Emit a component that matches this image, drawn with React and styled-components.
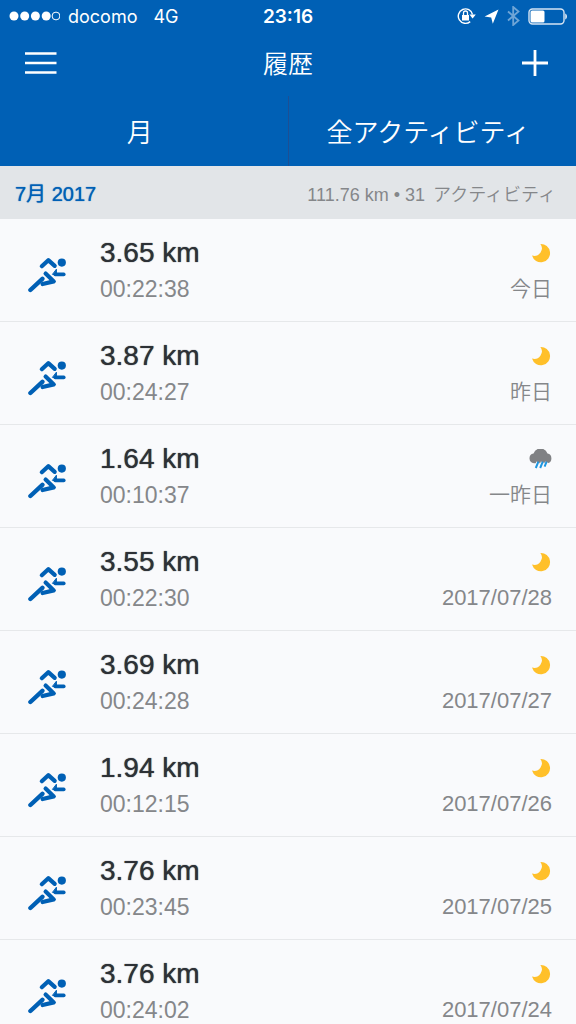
import React from 'react';
import styled, { createGlobalStyle } from 'styled-components';

const colors = {
    blue: '#0060b5',
    divider: '#1d4f94',
    section: '#e2e5e8',
    background: '#f9fafc',
    line: '#e6e8ea',
    text: '#2d3136',
    muted: '#85878a',
    moon: '#ffc02a',
    cloud: '#808184',
    rain: '#1e96e0',
};

const sans = '"Liberation Sans", "Noto Sans CJK JP", sans-serif';
const system = 'Inter, "Noto Sans CJK JP", sans-serif';

const GlobalStyle = createGlobalStyle`
    * {
        box-sizing: border-box;
    }

    body {
        margin: 0;
        background: ${colors.background};
        font-family: ${sans};
        font-weight: 350;
    }

    svg {
        display: block;
    }
`;

const Screen = styled.div`
    display: flex;
    flex-direction: column;
    height: 100vh;
`;

const Header = styled.header`
    flex: none;
    background: ${colors.blue};
    color: #fff;
`;

const StatusBar = styled.div`
    display: grid;
    grid-template-columns: 1fr auto 1fr;
    align-items: center;
    height: 32px;
    padding: 0 8px;
    font-family: ${system};
    font-size: 18px;
    font-weight: 400;
`;

const Carrier = styled.div`
    display: flex;
    align-items: center;
    gap: 8px;
`;

const Network = styled.span`
    margin-left: 8px;
`;

const Clock = styled.time`
    font-size: 19px;
    font-weight: 600;
`;

const StatusIcons = styled.div`
    display: flex;
    align-items: center;
    justify-content: flex-end;
    gap: 8px;
`;

const NavBar = styled.div`
    display: grid;
    grid-template-columns: 1fr auto 1fr;
    align-items: center;
    height: 64px;
    padding: 0 24px;
`;

const Title = styled.h1`
    margin: 0;
    font-size: 25px;
    font-weight: 350;
    line-height: 32px;
`;

const IconButton = styled.button`
    justify-self: ${props => props.$side};
    border: 0;
    padding: 0;
    background: none;
`;

const Tabs = styled.nav`
    display: flex;
    height: 70px;
`;

const Tab = styled.button`
    flex: 1;
    border: 0;
    padding: 0 8px 2px 0;
    background: none;
    color: inherit;
    font-family: inherit;
    font-size: 26px;
    font-weight: 350;

    & + & {
        border-left: 1px solid ${colors.divider};
    }
`;

const SectionHeader = styled.div`
    display: flex;
    flex: none;
    align-items: center;
    justify-content: space-between;
    height: 53px;
    padding: 0 20px 0 15px;
    background: ${colors.section};
`;

const Month = styled.h2`
    margin: 0;
    color: ${colors.blue};
    font-size: 20px;
    font-weight: 400;
    text-shadow: 0 0 1px ${colors.blue};
`;

const Summary = styled.div`
    display: flex;
    align-items: baseline;
    gap: 8px;
    color: ${colors.muted};
    font-size: 18px;
`;

const List = styled.ul`
    flex: 1;
    min-height: 0;
    margin: 0;
    padding: 0;
    overflow-y: auto;
    list-style: none;
    scrollbar-width: none;
`;

const Row = styled.li`
    display: flex;
    align-items: flex-start;
    height: 103px;
    padding: 16px 24px 0 28px;
    border-bottom: 1px solid ${colors.line};
`;

const Sport = styled.div`
    width: 72px;
    padding-top: 22px;
`;

const Stats = styled.div`
    flex: 1;
`;

const Distance = styled.div`
    color: ${colors.text};
    font-size: 28px;
    line-height: 36px;
    text-shadow: 0 0 1px ${colors.text};
`;

const Duration = styled.div`
    color: ${colors.muted};
    font-size: 23px;
    line-height: 36px;
`;

const When = styled.div`
    display: flex;
    flex-direction: column;
    align-items: flex-end;
`;

const Weather = styled.div`
    display: flex;
    align-items: center;
    height: 36px;
`;

const DateText = styled.span`
    color: ${colors.muted};
    font-size: ${props => (props.$relative ? '21px' : '22px')};
    line-height: 36px;
`;

const Signal = () => (
    <svg width="52" height="10" viewBox="0 0 52 10" fill="#fff">
        <circle cx="6" cy="5" r="4.5" />
        <circle cx="16.7" cy="5" r="4.5" />
        <circle cx="27.4" cy="5" r="4.5" />
        <circle cx="38.2" cy="5" r="4.5" />
        <circle cx="48" cy="5" r="3.9" fill="none" stroke="#fff" strokeWidth="1" />
    </svg>
);

const RotationLock = () => (
    <svg width="19" height="18" viewBox="0 0 19 18" fill="none" stroke="#fff">
        <path d="M13.2 14.6A7.2 7.2 0 1 1 15.5 7.5" strokeWidth="1.4" />
        <path d="M12.4 7.5h6.4l-3.2 4z" fill="#fff" stroke="none" />
        <rect x="5" y="8" width="7" height="5.5" fill="#fff" stroke="none" />
        <path d="M6.5 8V6a2 2 0 0 1 4 0v2" strokeWidth="1.3" />
    </svg>
);

const Location = () => (
    <svg width="15" height="15" viewBox="0 0 15 15" fill="#fff">
        <path d="M14.5.5 8.8 14.8 7.2 8.4.6 7.4z" />
    </svg>
);

const Bluetooth = () => (
    <svg width="13" height="20" viewBox="0 0 13 20" fill="none" stroke="#6fa5d6" strokeWidth="1.8">
        <path d="M1 5.5l10.5 9L6.2 19V1l5.3 4.5L1 14.5" />
    </svg>
);

const Battery = () => (
    <svg width="40" height="17" viewBox="0 0 40 17">
        <rect x="1" y="1" width="35" height="15" rx="3.5" fill="none" stroke="#d5e4f3" strokeWidth="1.4" />
        <rect x="2.5" y="2.5" width="14" height="12" rx="1.5" fill="#fff" />
        <path d="M37.2 5.5c2.4.8 2.4 5.2 0 6z" fill="#d5e4f3" />
    </svg>
);

const MenuIcon = () => (
    <svg width="33" height="24" viewBox="0 0 33 24" stroke="#fff" strokeWidth="2.6">
        <path d="M1 1.5h31.5M1 11h31.5M1 20.5h31.5" />
    </svg>
);

const PlusIcon = () => (
    <svg width="30" height="28" viewBox="0 0 30 28" stroke="#fff" strokeWidth="2.8">
        <path d="M0 13h26M13 0v26" />
    </svg>
);

const Runner = () => (
    <svg
        width="40"
        height="38"
        viewBox="0 0 40 38"
        fill="none"
        stroke={colors.blue}
        strokeWidth="4.2"
        strokeLinecap="round"
        strokeLinejoin="round"
    >
        <circle cx="33.8" cy="5.6" r="4.1" fill={colors.blue} stroke="none" />
        <path d="M13.8 9.2l6.5-6 6.4 5.6" />
        <path d="M27.2 17.4h8.6" strokeWidth="3.6" />
        <path d="M28.4 12.6v4.8h-3.6z" fill={colors.blue} strokeWidth="1" />
        <path d="M2.4 33L14.4 21.8" strokeWidth="4.4" />
        <path d="M17.6 16.6l8.2 7.8-11.2 2.6" />
    </svg>
);

const Moon = () => (
    <svg width="22" height="20" viewBox="0 0 22 20" fill={colors.moon}>
        <path d="M10.4.9A9.2 9.2 0 1 1 2 12.6 7.6 7.6 0 0 0 10.4.9z" />
    </svg>
);

const RainCloud = () => (
    <svg width="24" height="21" viewBox="0 0 24 21">
        <path
            d="M6 14.2a4.9 4.9 0 0 1-.5-9.7A7.4 7.4 0 0 1 19.5 4.6a4.9 4.9 0 0 1 0 9.6z"
            fill={colors.cloud}
        />
        <path d="M7.6 19.2l2.4-6M12 19.2l2.4-6M16.2 19.2l2.4-6" stroke={colors.background} strokeWidth="3.4" />
        <path d="M7.8 19l2.6-6.4M12.2 19l2.6-6.4M16.6 17.6l2-5" stroke={colors.rain} strokeWidth="2" />
    </svg>
);

const activities = [
    { distance: '3.65 km', duration: '00:22:38', date: '今日', relative: true },
    { distance: '3.87 km', duration: '00:24:27', date: '昨日', relative: true },
    { distance: '1.64 km', duration: '00:10:37', date: '一昨日', relative: true, rain: true },
    { distance: '3.55 km', duration: '00:22:30', date: '2017/07/28' },
    { distance: '3.69 km', duration: '00:24:28', date: '2017/07/27' },
    { distance: '1.94 km', duration: '00:12:15', date: '2017/07/26' },
    { distance: '3.76 km', duration: '00:23:45', date: '2017/07/25' },
    { distance: '3.76 km', duration: '00:24:02', date: '2017/07/24' },
];

const Activity = ({ distance, duration, date, relative, rain }) => (
    <Row>
        <Sport>
            <Runner />
        </Sport>
        <Stats>
            <Distance>{distance}</Distance>
            <Duration>{duration}</Duration>
        </Stats>
        <When>
            <Weather>{rain ? <RainCloud /> : <Moon />}</Weather>
            <DateText $relative={relative}>{date}</DateText>
        </When>
    </Row>
);

const App = () => (
    <Screen lang="ja">
        <GlobalStyle />
        <Header>
            <StatusBar>
                <Carrier>
                    <Signal />
                    <span>docomo</span>
                    <Network>4G</Network>
                </Carrier>
                <Clock>23:16</Clock>
                <StatusIcons>
                    <RotationLock />
                    <Location />
                    <Bluetooth />
                    <Battery />
                </StatusIcons>
            </StatusBar>
            <NavBar>
                <IconButton $side="start" aria-label="メニュー">
                    <MenuIcon />
                </IconButton>
                <Title>履歴</Title>
                <IconButton $side="end" aria-label="追加">
                    <PlusIcon />
                </IconButton>
            </NavBar>
            <Tabs>
                <Tab>月</Tab>
                <Tab>全アクティビティ</Tab>
            </Tabs>
        </Header>
        <SectionHeader>
            <Month>7月 2017</Month>
            <Summary>
                <span>111.76 km • 31</span>
                <span>アクティビティ</span>
            </Summary>
        </SectionHeader>
        <List>
            {activities.map(activity => (
                <Activity key={activity.date} {...activity} />
            ))}
        </List>
    </Screen>
);

export default App;
